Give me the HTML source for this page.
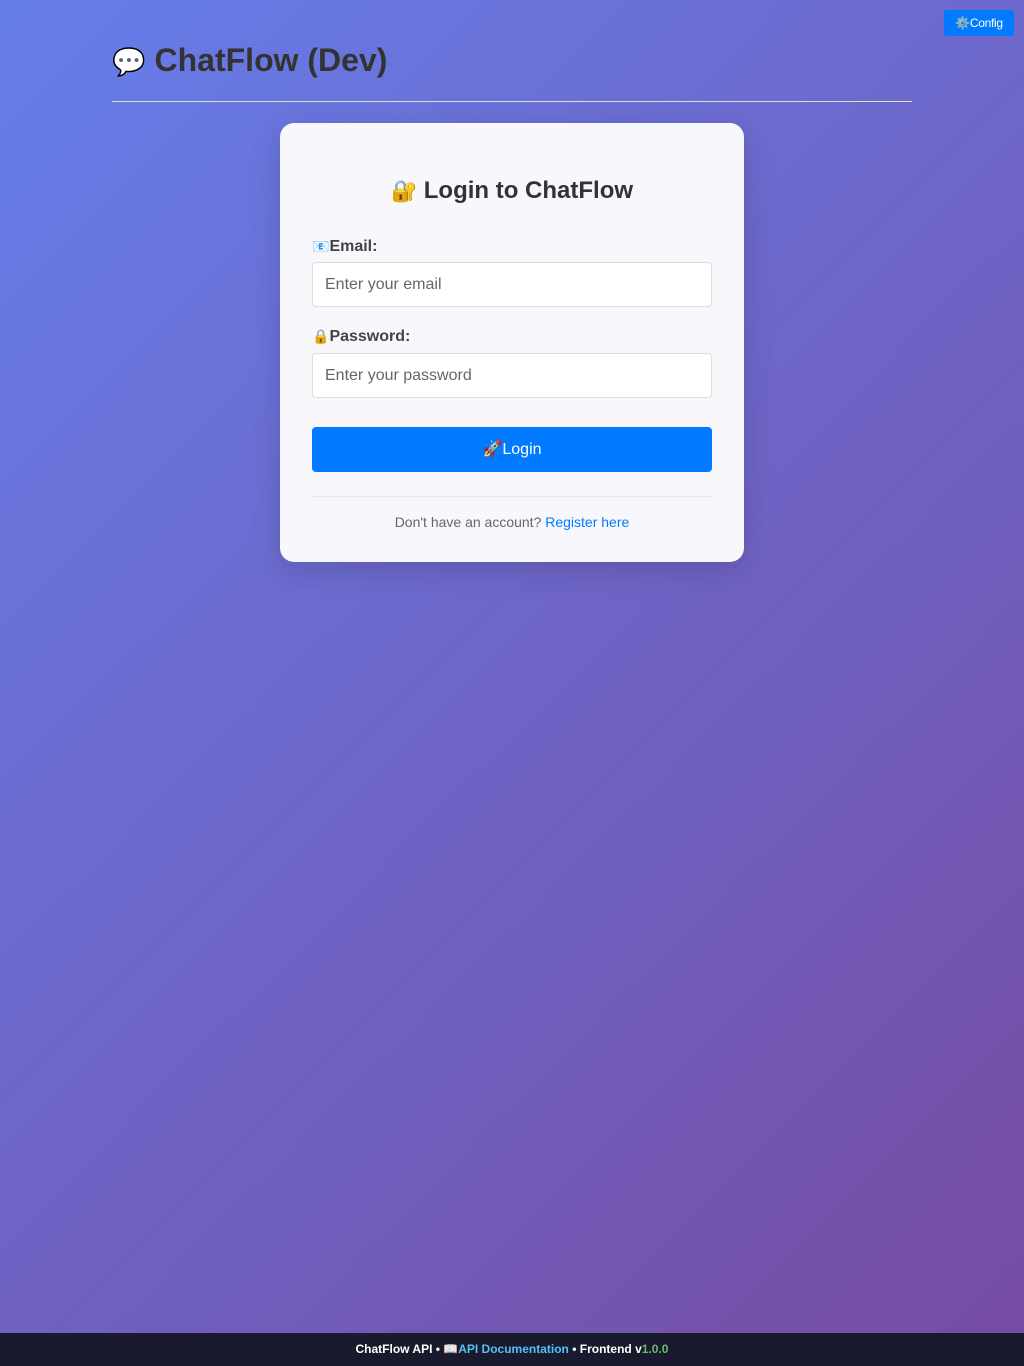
<!DOCTYPE html>
<html><head><meta charset="utf-8"><style>
*{box-sizing:border-box;margin:0;padding:0}
body{width:1024px;height:1366px;overflow:hidden;font-family:"Liberation Sans","Noto Sans CJK JP",sans-serif;background:linear-gradient(135deg,#667eea 0%,#764ba2 100%);position:relative;color:#333}
.cfg{position:absolute;left:944px;top:10px;width:70px;height:26px;background:#007bff;color:#fff;font-size:12px;border-radius:3px;display:flex;align-items:center;justify-content:center;letter-spacing:-0.3px}
h1{position:absolute;left:112px;top:42px;font-size:32px;font-weight:bold;color:#333}
h1 .e{font-size:27px}
.hr{position:absolute;left:112px;top:101px;width:800px;height:1px;background:#ddd}
.card{position:absolute;left:280px;top:123px;width:464px;height:439px;background:#f8f8fc;border-radius:14px;box-shadow:0 8px 30px rgba(0,0,0,.15)}
h2{position:absolute;left:0;right:0;top:54px;text-align:center;font-size:24px;font-weight:bold;color:#333}
h2 .e{font-size:21px}
.lbl{position:absolute;left:32px;font-size:16px;font-weight:bold;color:#444}
.lbl .e{font-size:14px}
.inp{position:absolute;left:32px;width:400px;height:45px;background:#fff;border:1px solid #ddd;border-radius:4px;padding-left:12px;line-height:43px;font-size:16px;color:#666}
.btn{position:absolute;left:32px;top:304px;width:400px;height:45px;background:#007bff;border-radius:4px;color:#fff;font-size:16px;text-align:center;line-height:45px}
.sep{position:absolute;left:32px;top:373px;width:400px;height:1px;background:#e6e6ee}
.reg{position:absolute;left:0;right:0;top:391px;text-align:center;font-size:14px;color:#666}
.reg span{color:#007bff}
.foot{position:absolute;left:0;top:1333px;width:1024px;height:33px;background:#1a1a2e;color:#fff;font-size:12px;font-weight:bold;text-align:center;line-height:33px}
</style></head><body>
<div class="cfg">⚙️Config</div>
<h1><span class="e">💬</span> ChatFlow (Dev)</h1>
<div class="hr"></div>
<div class="card">
<h2><span class="e">🔐</span> Login to ChatFlow</h2>
<div class="lbl" style="top:115px"><span class="e">📧</span>Email:</div>
<div class="inp" style="top:139px">Enter your email</div>
<div class="lbl" style="top:205px"><span class="e">🔒</span>Password:</div>
<div class="inp" style="top:230px">Enter your password</div>
<div class="btn">🚀Login</div>
<div class="sep"></div>
<div class="reg">Don't have an account? <span>Register here</span></div>
</div>
<div class="foot">ChatFlow API • 📖<span style="color:#4fc3f7">API Documentation</span> • Frontend v<span style="color:#66bb6a">1.0.0</span></div>
</body></html>
